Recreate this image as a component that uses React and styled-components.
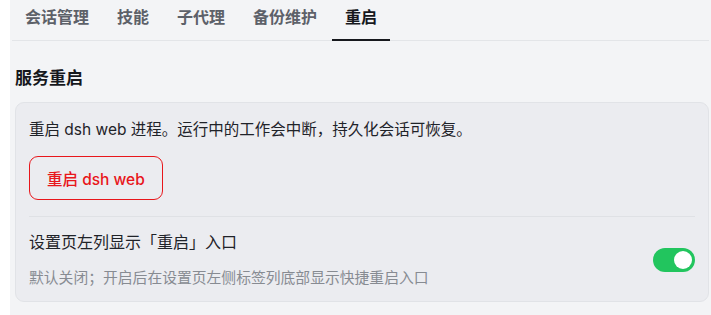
import React, { useState } from 'react'
import styled, { createGlobalStyle } from 'styled-components'

const GlobalStyle = createGlobalStyle`
  html, body {
    margin: 0;
    padding: 0;
    background: #ffffff;
  }
  body {
    font-family: Inter, "Noto Sans CJK SC", sans-serif;
    color: #1f2329;
  }
`

const Page = styled.div`
  padding-left: 10px;
  height: 315px;
  box-sizing: border-box;
`

const Panel = styled.div`
  background: #f3f4f6;
  height: 100%;
  padding: 0 2px 0 2px;
  box-sizing: border-box;
`

const TabBar = styled.div`
  display: flex;
  gap: 2px;
  border-bottom: 1px solid #e3e5e8;
`

const Tab = styled.div`
  padding: 6px 13px 11px;
  font-size: 16px;
  line-height: 22px;
  font-weight: 600;
  color: ${p => (p.active ? '#16181d' : '#5d6169')};
  border-bottom: 2px solid ${p => (p.active ? '#16181d' : 'transparent')};
  margin-bottom: -1px;
  cursor: pointer;
`

const Section = styled.div`
  padding: 0 0 0 3px;
`

const Heading = styled.h2`
  margin: 25px 0 12px;
  font-size: 17px;
  line-height: 24px;
  font-weight: 700;
  color: #16181d;
`

const Card = styled.div`
  background: #ebecf0;
  border: 1px solid #e1e3e7;
  border-radius: 9px;
  padding: 15px 13px 12px;
`

const Desc = styled.div`
  font-size: 15.5px;
  line-height: 24px;
  color: #1f2329;
`

const DangerButton = styled.button`
  margin-top: 14px;
  height: 44px;
  padding: 0 17px;
  background: transparent;
  border: 1px solid #e8161b;
  border-radius: 9px;
  color: #e8161b;
  font-family: inherit;
  font-size: 15.5px;
  font-weight: 500;
  cursor: pointer;
`

const Divider = styled.div`
  height: 1px;
  background: #dfe1e5;
  margin: 16px 0 13px;
`

const SettingRow = styled.div`
  display: flex;
  align-items: center;
  justify-content: space-between;
`

const SettingText = styled.div`
  display: flex;
  flex-direction: column;
  gap: 13px;
`

const Label = styled.div`
  font-size: 16px;
  line-height: 24px;
  color: #1f2329;
`

const Hint = styled.div`
  font-size: 14.8px;
  line-height: 22px;
  color: #878b92;
`

const Switch = styled.button`
  width: 42px;
  height: 24px;
  border-radius: 12px;
  border: none;
  padding: 0;
  background: ${p => (p.on ? '#22c55e' : '#c9ccd1')};
  position: relative;
  cursor: pointer;

  &::after {
    content: '';
    position: absolute;
    top: 3px;
    left: ${p => (p.on ? '21px' : '3px')};
    width: 18px;
    height: 18px;
    border-radius: 50%;
    background: #ffffff;
  }
`

const tabs = ['会话管理', '技能', '子代理', '备份维护', '重启']

export default function App() {
  const [on, setOn] = useState(true)
  return (
    <>
      <GlobalStyle />
      <Page>
        <Panel>
          <TabBar>
            {tabs.map(t => (
              <Tab key={t} active={t === '重启'}>{t}</Tab>
            ))}
          </TabBar>
          <Section>
            <Heading>服务重启</Heading>
            <Card>
              <Desc>重启 dsh web 进程。运行中的工作会中断，持久化会话可恢复。</Desc>
              <DangerButton>重启 dsh web</DangerButton>
              <Divider />
              <SettingRow>
                <SettingText>
                  <Label>设置页左列显示「重启」入口</Label>
                  <Hint>默认关闭；开启后在设置页左侧标签列底部显示快捷重启入口</Hint>
                </SettingText>
                <Switch on={on} onClick={() => setOn(!on)} />
              </SettingRow>
            </Card>
          </Section>
        </Panel>
      </Page>
    </>
  )
}
